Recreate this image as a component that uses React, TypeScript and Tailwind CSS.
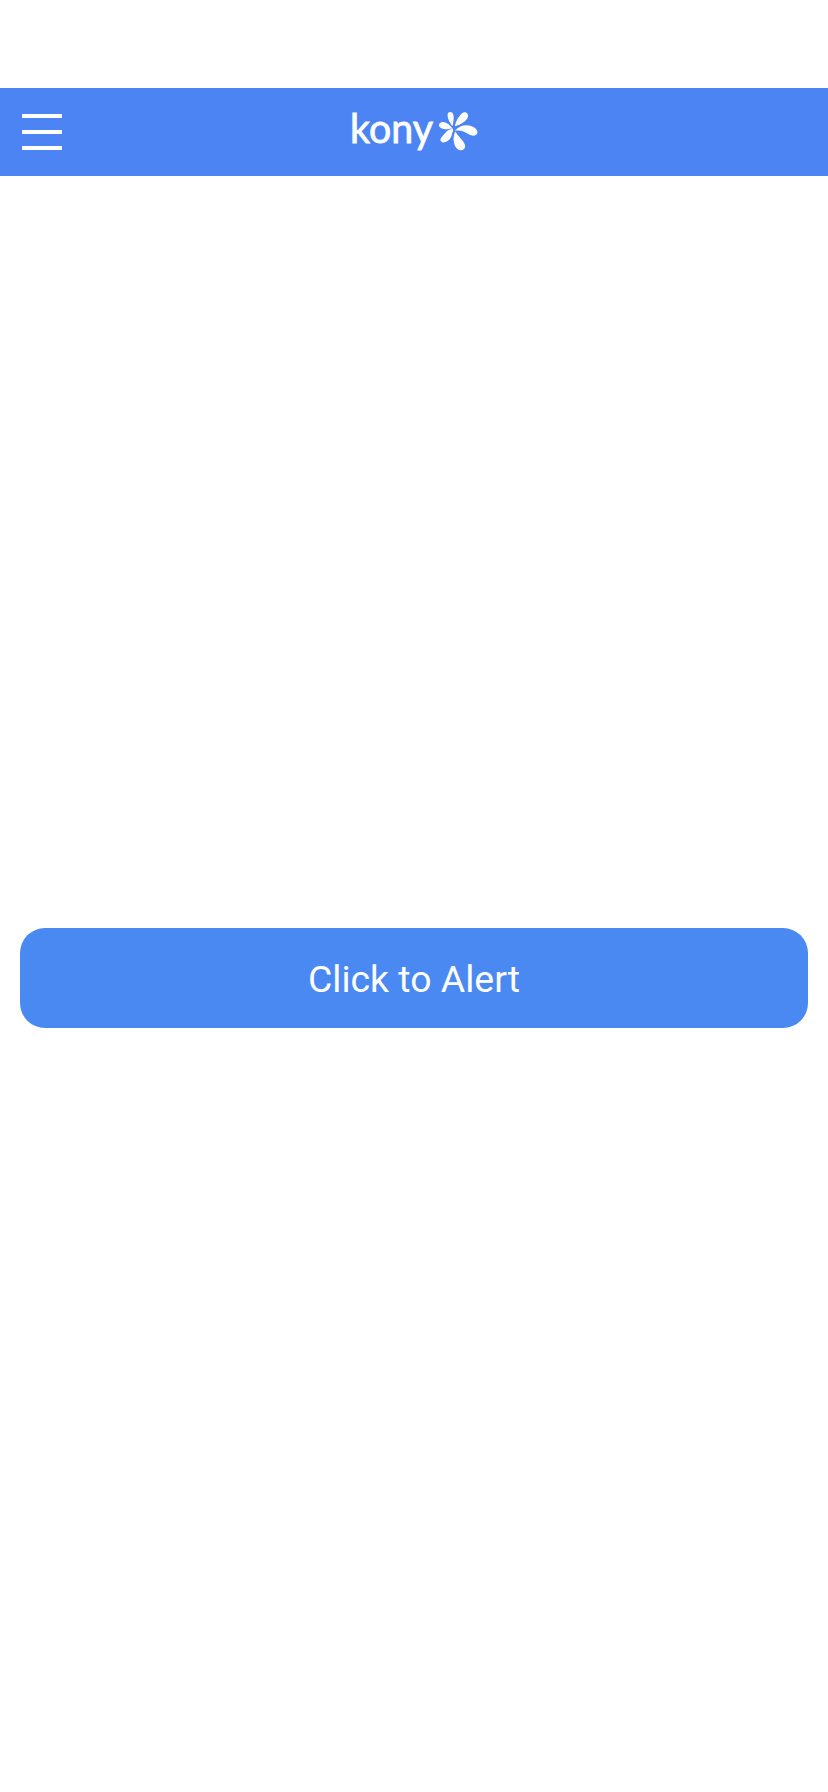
function KonyLogo() {
  return (
    <svg width="150" height="64" viewBox="0 0 150 64" fill="white" role="img" aria-label="kony">
      <text x="10.1" y="43.4" fontSize="40.4" fontFamily="Lato, sans-serif" stroke="white" strokeWidth="0.8" textLength="82.8" lengthAdjust="spacingAndGlyphs">
        kony
      </text>
      <g transform="translate(90.3 4.6) scale(.33333)">
        <path d="M66 64C56 52 51 38 52 30C53 20 66 20 69 30C72 39 69 51 67 64Z" />
        <path d="M74 65C75 51 86 35 95 26C104 19 116 26 113 37C109 49 91 60 74 65Z" />
        <path d="M64 71C53 76 36 75 29 68C23 60 28 51 39 52C51 54 60 62 66 71C70 76 69 81 65 86C61 78 62 75 64 71Z" />
        <path d="M62 74C67 81 66 91 62 98C54 112 39 118 32 110C27 101 37 94 45 85C50 79 55 75 62 74Z" />
        <path d="M75 81C82 93 100 109 104 121C107 132 96 140 86 136C70 129 65 101 75 81Z" />
        <path d="M74 79C86 62 108 58 126 66C136 70 143 78 141 86C138 95 126 95 116 90C104 82 91 75 74 79Z" />
      </g>
    </svg>
  );
}

export default function App() {
  return (
    <div className="flex h-[1792px] w-full flex-col bg-white pt-[88px]">
      <header className="grid h-[88px] shrink-0 grid-cols-[340px_150px_1fr] items-center bg-[#4d84f3]">
        <button type="button" aria-label="Menu" className="ml-[22px] flex w-10 flex-col gap-3">
          <span className="h-1 w-full bg-white" />
          <span className="h-1 w-full bg-white" />
          <span className="h-1 w-full bg-white" />
        </button>
        <KonyLogo />
      </header>
      <main className="flex flex-1 flex-col px-5 pt-[752px]">
        <button
          type="button"
          className="h-[100px] w-full rounded-[25px] bg-[#4b89f2] pt-[3px] text-center font-[Roboto,sans-serif] text-[37.4px] text-white"
        >
          Click to Alert
        </button>
      </main>
    </div>
  );
}
